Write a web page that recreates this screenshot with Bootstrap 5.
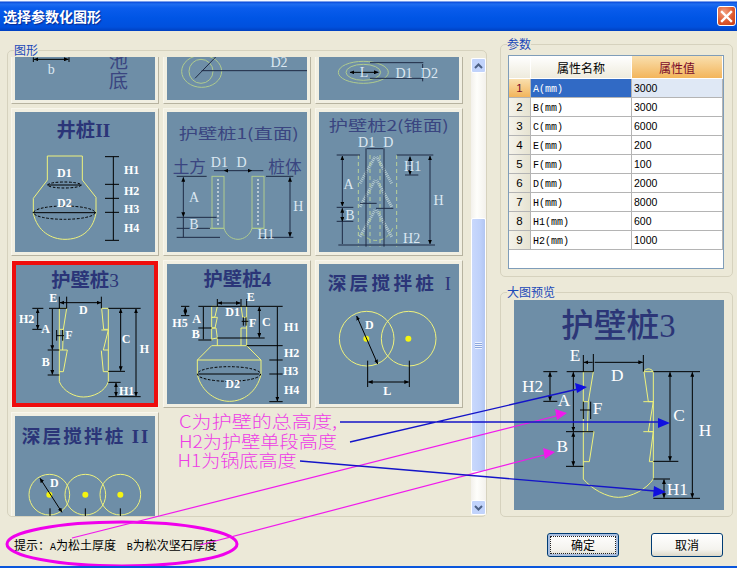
<!DOCTYPE html>
<html lang="zh">
<head>
<meta charset="utf-8">
<title>选择参数化图形</title>
<link href="https://cdn.jsdelivr.net/npm/bootstrap@5.3.0/dist/css/bootstrap.min.css" rel="stylesheet">
<style>
html,body{width:737px;height:568px;overflow:hidden;margin:0;background:#ECE9D8;}
body{font-family:"Liberation Sans","Noto Sans CJK SC",sans-serif;font-size:12px;color:#000;}
.dlg{position:relative;width:737px;height:568px;border-bottom:2px solid #0A56DC;overflow:hidden;}
.cap{height:31px;padding:0 1px 0 3px;background:linear-gradient(#FFFFFF 0,#E8F0FF 1px,#0A4AD8 2px,#1F6DF0 4px,#0A5CEC 8px,#0055E5 18px,#0050DD 27px,#0040C0 31px);}
.cap-title{font:bold 14px "Noto Sans CJK SC",sans-serif;color:#fff;text-shadow:1px 1px 1px #0A2A90;letter-spacing:0;}
.cap-close{width:19px;height:20px;margin-top:1px;padding:0;border:1px solid #fff;border-radius:3px;background:radial-gradient(circle at 35% 30%,#F2A080,#DD5A30 55%,#C63A12);}
.dlg-body{padding:12px 4px 0 7px;gap:13px;}
.col-left{width:480px;}
.col-right{width:233px;margin-top:-6px;}
.grp{margin:0;padding:0;min-width:0;border:1px solid #D6D2BE;border-radius:5px;}
.grp>legend{float:none;width:auto;margin:0 0 0 6px;padding:0;font:12px/14px "Noto Sans CJK SC",sans-serif;color:#1A48B8;background:#ECE9D8;}
.grp-gallery{height:474px;}
.viewport{width:463px;height:459px;overflow:hidden;}
.thumb-grid{display:grid;grid-template-columns:repeat(3,148px);grid-auto-rows:148px;gap:4px;margin:-101px 0 0 3px;}
.thumb{padding:3px;background:#F1EFE2;border:1px solid #F8F6EC;border-right-color:#B7B3A0;border-bottom-color:#B7B3A0;box-sizing:border-box;}
.thumb svg,.preview svg{display:block;background:#6E8EA7;}
.thumb.picked{padding:0;border:0;}
.picked-box{border:4px solid #EE0D0D;margin:1px;width:146px;height:146px;}
.sbar{width:15px;margin:1px 0 1px 1px;background:linear-gradient(90deg,#F3F1EC,#FEFEFB 40%,#F3F1EC);}
.sbtn{height:15px;border:1px solid #fff;border-radius:2px;background:#C1D3FB;color:#4D6185;}
.sthumb{margin-top:145px;height:254px;border:1px solid #fff;border-radius:2px;background:linear-gradient(90deg,#C9D8FC,#BFD1FA 60%,#B2C6F2);}
.grip{width:7px;height:7px;background:repeating-linear-gradient(#EEF3FE 0,#EEF3FE 1px,#8CA6DC 1px,#8CA6DC 2px);}
.hint{height:43px;padding:21px 0 0 7px;font:12px/14px "Noto Sans CJK SC",sans-serif;white-space:pre;}
.hint b,.pname b{font:10px "Liberation Mono",monospace;}
.grp-param{height:240px;margin-top:0;}
.grp-param .tbl-box{margin:4px 0 0 7px;width:216px;height:214px;background:#fff;border:1px solid #7F9DB9;}
.pgrid{width:214px;table-layout:fixed;border-collapse:separate;border-spacing:0;margin:0;font:10.5px "Liberation Sans",sans-serif;}
.pgrid th,.pgrid td{height:19px;padding:0 2px;vertical-align:middle;border:0;border-right:1px solid #B4B4B4;border-bottom:1px solid #B4B4B4;box-shadow:none;background:#fff;color:#000;}
.pgrid thead th{height:23px;font:12px "Noto Sans CJK SC",sans-serif;text-align:center;border-color:#fff;background:linear-gradient(#FFFFFF,#EEEBDD);}
.pgrid thead th.hot{background:linear-gradient(#F9DFAE,#F3B55B);color:#7A0A2A;}
.pgrid tbody th{text-align:center;font-weight:400;font-size:11.5px;background:linear-gradient(90deg,#F5F3EA,#E6E3D2);}
.pgrid tbody th.hot{background:linear-gradient(#F9DFAE,#F3B55B);color:#7A0A2A;}
.pname{color:#000;}
.pgrid td.sel-name{background:#316AC5;color:#fff;}
.pgrid td.sel-val{background:#DFE8F5;}
.grp-preview{height:232px;margin-top:8px;}
.preview{margin:1px 0 0 13px;}
.xp-btn{width:72px;height:24px;padding:0;font:12px/20px "Noto Sans CJK SC",sans-serif;color:#000;border:1px solid #003C74;border-radius:3px;background:linear-gradient(#FFFFFF,#F4F3EE 70%,#DCD8C8);}
.xp-btn.is-default{box-shadow:inset 0 0 0 2px #A9BEDF;outline:1px dotted #222;outline-offset:-4px;}
.btn-row{margin-top:16px;gap:32px;padding-left:47px;}
.overlay{position:absolute;left:0;top:0;pointer-events:none;}
.note{font:17px "Noto Sans CJK SC",sans-serif;fill:#EE3CE6;font-weight:300;}
svg text{text-anchor:middle;}
.ttl{font-family:"Noto Sans CJK SC",sans-serif;font-weight:700;fill:#2B3578;}
.ttl-thin{font-family:"Noto Sans CJK SC",sans-serif;font-weight:400;fill:#3A4580;}
.ttl-big{font-family:"Noto Sans CJK SC",sans-serif;font-weight:500;fill:#2C3677;}
.lb{font-family:"Liberation Serif",serif;font-weight:700;fill:#fff;font-size:36px;}
.lb-pale{font-family:"Liberation Serif",serif;font-weight:400;fill:#DCE8F2;font-size:42px;}
.yl{fill:none;stroke:#EFF27C;stroke-width:3;}
.grn{fill:none;stroke:#AFCB8E;stroke-width:3;}
.blk{fill:none;stroke:#000;stroke-width:3;}
.dk{fill:none;stroke:#1F2B45;stroke-width:3;}
.dash{fill:none;stroke:#000;stroke-width:3;stroke-dasharray:8 5;}
.dots{fill:none;stroke:#E8F0F0;stroke-width:5;stroke-dasharray:4 8;}
.ctr{fill:#F5F510;}
</style>
</head>
<body>
<svg width="0" height="0" class="position-absolute">
  <defs>
    <marker id="ah" markerUnits="userSpaceOnUse" markerWidth="14" markerHeight="12" refX="13" refY="6" orient="auto-start-reverse"><path d="M0 0L14 6L0 12z" fill="#000"/></marker>
  </defs>
</svg>

<div class="dlg d-flex flex-column">
  <div class="cap d-flex justify-content-between align-items-center">
    <span class="cap-title">选择参数化图形</span>
    <button class="cap-close d-flex align-items-center justify-content-center" type="button" aria-label="关闭">
      <svg width="13" height="13" viewBox="0 0 13 13"><path d="M2 2L11 11M11 2L2 11" stroke="#fff" stroke-width="2.4" stroke-linecap="square"/></svg>
    </button>
  </div>

  <div class="dlg-body d-flex">
    <div class="col-left">
      <fieldset class="grp grp-gallery">
        <legend>图形</legend>
        <div class="d-flex">
          <div class="viewport">
            <div class="thumb-grid">

              <div class="thumb"><svg width="140" height="140" viewBox="45 -120 420 420">
                <path class="blk" d="M100 172V186M207 172V186"/><path class="blk" d="M102 178H205" marker-start="url(#ah)" marker-end="url(#ah)"/>
                <text class="lb-pale" x="154" y="222">b</text>
                <text class="ttl-thin" x="355" y="205" font-size="58">池</text><text class="ttl-thin" x="355" y="265" font-size="58">底</text>
              </svg></div>

              <div class="thumb"><svg width="140" height="140" viewBox="501 -120 420 420">
                <ellipse class="grn" cx="605" cy="214" rx="60" ry="48"/><circle class="grn" cx="603" cy="214" r="36"/>
                <path class="dk" d="M605 212H921M585 235L648 170"/>
                <text class="lb-pale" x="837" y="200">D2</text>
              </svg></div>

              <div class="thumb"><svg width="140" height="140" viewBox="27 -240 420 420">
                <ellipse class="grn" cx="160" cy="97" rx="75" ry="33"/><ellipse class="grn" cx="160" cy="97" rx="52" ry="24"/>
                <path class="dk" d="M180 68H340M180 115H340M338 72V124"/><path class="blk" d="M120 97H205" marker-start="url(#ah)" marker-end="url(#ah)"/>
                <text class="lb-pale" x="162" y="110">L</text><text class="lb-pale" x="282" y="115">D1</text><text class="lb-pale" x="358" y="115">D2</text>
              </svg></div>

              <div class="thumb"><svg width="140" height="140" viewBox="45 36 420 420">
                <text class="ttl" x="250" y="110" font-size="58">井桩<tspan font-family="Liberation Serif">II</tspan></text>
                <path class="yl" d="M142 240V168H247V240L288 292V340M142 240L100 295V340"/>
                <path class="yl" d="M100 340C112 395 155 418 195 418C240 418 278 395 288 340"/>
                <ellipse class="dash" cx="193" cy="255" rx="50" ry="9"/><ellipse class="dash" cx="193" cy="338" rx="92" ry="20"/>
                <path class="blk" d="M142 255H245M98 338H288" stroke-width="4"/>
                <path class="blk" d="M340 170V420M315 170H357M315 253H357M315 295H357M315 337H357M315 421H357"/>
                <text class="lb" x="193" y="232">D1</text><text class="lb" x="193" y="322">D2</text>
                <text class="lb" x="395" y="223">H1</text><text class="lb" x="395" y="285">H2</text><text class="lb" x="395" y="339">H3</text><text class="lb" x="395" y="397">H4</text>
              </svg></div>

              <div class="thumb"><svg width="140" height="140" viewBox="21 36 420 420">
                <text class="ttl-thin" x="236" y="118" font-size="44" textLength="360" lengthAdjust="spacingAndGlyphs">护壁桩1(直面)</text>
                <text class="ttl-thin" x="88" y="218" font-size="50" fill="#3A4580">土方</text><text class="ttl-thin" x="375" y="218" font-size="50">桩体</text>
                <text class="lb-pale" x="178" y="200">D1</text><text class="lb-pale" x="245" y="200">D</text>
                <rect class="grn" x="156" y="229" width="36" height="156"/><rect class="grn" x="276" y="229" width="36" height="156"/>
                <path class="dots" d="M174 238V382M294 238V382"/>
                <path class="grn" d="M146 385H192C198 405 215 418 234 418C252 418 270 405 276 385H312"/>
                <path class="dk" d="M50 229H140M318 229H400M50 352H170M50 385H150M50 412H180M300 412H400"/>
                <path class="dk" d="M70 232V350" marker-start="url(#ah)" marker-end="url(#ah)"/><path class="dk" d="M70 350V412"/>
                <path class="dk" d="M390 232V410" marker-start="url(#ah)" marker-end="url(#ah)"/>
                <path class="dk" d="M162 212H192M276 212H310"/><path class="dk" d="M192 212H276" marker-start="url(#ah)" marker-end="url(#ah)"/>
                <text class="lb-pale" x="102" y="305">A</text><text class="lb-pale" x="102" y="388">B</text><text class="lb-pale" x="415" y="333">H</text><text class="lb-pale" x="318" y="418">H1</text>
              </svg></div>

              <div class="thumb"><svg width="140" height="140" viewBox="27 216 420 420">
                <text class="ttl-thin" x="236" y="272" font-size="44" textLength="360" lengthAdjust="spacingAndGlyphs">护壁桩2(锥面)</text>
                <text class="lb-pale" x="170" y="320">D1</text><text class="lb-pale" x="235" y="320">D</text>
                <path d="M150 430L195 350M245 430L200 350M150 500L195 420M245 500L200 420M150 590L195 510M245 590L200 510" fill="none" stroke="#B8CDD0" stroke-width="9" stroke-dasharray="3 3"/>
                <path fill="none" stroke="#B9D19A" stroke-width="3" stroke-dasharray="12 9" d="M145 345V620M180 345V620M210 345V620M260 345V620"/>
                <path class="grn" stroke-dasharray="12 9" d="M145 560C160 610 230 620 250 560"/>
                <path class="dk" d="M80 345H150M260 345H370M85 615H375M168 325V620M222 325V620M170 326H220M285 405H325M150 490H200M198 505H250M80 502H130M80 544H130"/>
                <path class="dk" d="M97 348V498" marker-start="url(#ah)" marker-end="url(#ah)"/><path class="dk" d="M97 505V612"/><path class="dk" d="M97 505V544" marker-start="url(#ah)" marker-end="url(#ah)"/>
                <path class="dk" d="M360 348V612" marker-start="url(#ah)" marker-end="url(#ah)"/><path class="dk" d="M300 350V404" marker-start="url(#ah)" marker-end="url(#ah)"/>
                <text class="lb-pale" x="116" y="446">A</text><text class="lb-pale" x="120" y="540">B</text><text class="lb-pale" x="308" y="394">H1</text><text class="lb-pale" x="386" y="494">H</text><text class="lb-pale" x="305" y="608">H2</text>
              </svg></div>

              <div class="thumb picked"><div class="picked-box"><svg width="138" height="138" viewBox="48 45 414 414">
                <text class="ttl" x="255" y="110" font-size="58">护壁桩<tspan font-family="Liberation Serif" font-weight="400">3</tspan></text>
                <path class="yl" d="M178 175V395M178 175H200L190 238H178M190 238L188 300M178 300H202L190 365H178"/>
                <path class="yl" d="M325 175V395M325 175H305L311 238H325M304 240H325L310 300H325M304 302L310 365H325"/>
                <path class="yl" d="M178 395C190 425 225 441 250 441C280 441 315 425 325 395"/>
                <path class="blk" d="M147 175H200M325 175H422M178 140V175M200 140V175M304 140V175M97 175H130M97 238H125M143 300H178M143 375H178M325 364H375M325 440H422M325 397H362M170 240V272M188 240V272"/>
                <path class="blk" d="M180 158H303" marker-start="url(#ah)" marker-end="url(#ah)"/>
                <path class="blk" d="M113 177V237" marker-start="url(#ah)" marker-end="url(#ah)"/>
                <path class="blk" d="M157 177V299" marker-end="url(#ah)"/><path class="blk" d="M157 301V373" marker-end="url(#ah)"/>
                <path class="blk" d="M362 177V362" marker-start="url(#ah)" marker-end="url(#ah)"/>
                <path class="blk" d="M408 177V438" marker-start="url(#ah)" marker-end="url(#ah)"/>
                <path class="blk" d="M348 399V438" marker-start="url(#ah)" marker-end="url(#ah)"/>
                <path class="blk" d="M170 257H192" stroke-width="4"/>
                <text class="lb" x="160" y="155">E</text><text class="lb" x="250" y="193">D</text><text class="lb" x="80" y="218">H2</text><text class="lb" x="137" y="249">A</text><text class="lb" x="207" y="267">F</text><text class="lb" x="378" y="280">C</text><text class="lb" x="433" y="310">H</text><text class="lb" x="137" y="347">B</text><text class="lb" x="380" y="434">H1</text>
              </svg></div></div>

              <div class="thumb"><svg width="140" height="140" viewBox="21 40 420 420">
                <text class="ttl" x="232" y="105" font-size="58">护壁桩<tspan font-family="Liberation Serif">4</tspan></text>
                <path class="yl" d="M155 167H172L165 198L160 200H155M155 167V270M155 200H172L165 232H155M155 232H168L172 262L155 265M260 167H243L248 200H260M260 167V285M243 232H258"/>
                <path class="yl" d="M172 262V285M243 232V285M155 285H260M155 285L112 328V372M260 285L303 328V372M112 328H303"/>
                <path class="yl" d="M112 372C125 425 170 452 208 452C250 452 290 425 303 372"/>
                <ellipse class="dash" cx="207" cy="370" rx="95" ry="22"/>
                <path class="blk" d="M115 370H298" stroke-width="4"/>
                <path class="blk" d="M115 167H368M172 145V167M243 145V167M260 145V167M63 167H88M63 195H88M115 232H155M115 268H155M172 262H314M260 285H368M328 328H368M328 370H368M328 453H368"/>
                <path class="blk" d="M174 157H241" marker-start="url(#ah)" marker-end="url(#ah)"/>
                <path class="blk" d="M76 169V193" marker-start="url(#ah)" marker-end="url(#ah)"/>
                <path class="blk" d="M130 169V266"/>
                <path class="blk" d="M298 169V260" marker-start="url(#ah)" marker-end="url(#ah)"/>
                <path class="blk" d="M352 169V451" marker-end="url(#ah)"/>
                <path class="blk" d="M245 212H265M250 200V225M258 200V225" stroke-width="3"/>
                <text class="lb" x="272" y="152">E</text><text class="lb" x="218" y="196">D1</text><text class="lb" x="60" y="230">H5</text><text class="lb" x="110" y="216">A</text><text class="lb" x="278" y="230">F</text><text class="lb" x="319" y="226">C</text><text class="lb" x="395" y="240">H1</text><text class="lb" x="107" y="262">B</text><text class="lb" x="395" y="320">H2</text><text class="lb" x="392" y="374">H3</text><text class="lb" x="395" y="430">H4</text><text class="lb" x="218" y="412">D2</text>
              </svg></div>

              <div class="thumb"><svg width="140" height="140" viewBox="27 26 420 420">
                <text class="ttl" x="238" y="105" font-size="56" textLength="370">深层搅拌桩 <tspan font-family="Liberation Serif" font-weight="400">I</tspan></text>
                <circle class="yl" cx="170" cy="250" r="82"/><circle class="yl" cx="296" cy="250" r="82"/>
                <circle class="ctr" cx="169" cy="250" r="9"/><circle class="ctr" cx="295" cy="250" r="9"/>
                <path class="blk" d="M140 182L203 326" marker-start="url(#ah)" marker-end="url(#ah)"/>
                <path class="blk" d="M173 316V395M298 316V395"/><path class="blk" d="M175 380H296" marker-start="url(#ah)" marker-end="url(#ah)"/>
                <text class="lb" x="178" y="221">D</text><text class="lb" x="232" y="419">L</text>
              </svg></div>

              <div class="thumb"><svg width="140" height="140" viewBox="45 48 420 420">
                <text class="ttl" x="255" y="130" font-size="56" textLength="380">深层搅拌桩 <tspan font-family="Liberation Serif">II</tspan></text>
                <circle class="yl" cx="148" cy="284" r="61"/><circle class="yl" cx="256" cy="284" r="61"/><circle class="yl" cx="361" cy="284" r="61"/>
                <circle class="ctr" cx="148" cy="284" r="9"/><circle class="ctr" cx="256" cy="284" r="9"/><circle class="ctr" cx="361" cy="284" r="9"/>
                <path class="blk" d="M120 235L186 337" marker-start="url(#ah)" marker-end="url(#ah)"/>
                <path class="blk" d="M150 325V348M256 325V348M361 325V348"/>
                <text class="lb" x="163" y="262">D</text>
              </svg></div>

            </div>
          </div>

          <div class="sbar d-flex flex-column">
            <div class="sbtn d-flex align-items-center justify-content-center"><svg width="9" height="6" viewBox="0 0 9 6"><path d="M1 5L4.5 1.5L8 5" fill="none" stroke="#4D6185" stroke-width="2"/></svg></div>
            <div class="sthumb d-flex align-items-center justify-content-center"><div class="grip"></div></div>
            <div class="sbtn mt-auto d-flex align-items-center justify-content-center"><svg width="9" height="6" viewBox="0 0 9 6"><path d="M1 1L4.5 4.5L8 1" fill="none" stroke="#4D6185" stroke-width="2"/></svg></div>
          </div>
        </div>
      </fieldset>
      <div class="hint">提示：<b>A</b>为松土厚度    <b>B</b>为松次坚石厚度</div>
    </div>

    <div class="col-right">
      <fieldset class="grp grp-param">
        <legend>参数</legend>
        <div class="tbl-box">
          <table class="table pgrid">
            <colgroup><col style="width:22px"><col style="width:101px"><col style="width:91px"></colgroup>
            <thead><tr><th></th><th>属性名称</th><th class="hot">属性值</th></tr></thead>
            <tbody>
              <tr><th class="hot">1</th><td class="sel-name pname"><b>A(mm)</b></td><td class="sel-val">3000</td></tr>
              <tr><th>2</th><td class="pname"><b>B(mm)</b></td><td>3000</td></tr>
              <tr><th>3</th><td class="pname"><b>C(mm)</b></td><td>6000</td></tr>
              <tr><th>4</th><td class="pname"><b>E(mm)</b></td><td>200</td></tr>
              <tr><th>5</th><td class="pname"><b>F(mm)</b></td><td>100</td></tr>
              <tr><th>6</th><td class="pname"><b>D(mm)</b></td><td>2000</td></tr>
              <tr><th>7</th><td class="pname"><b>H(mm)</b></td><td>8000</td></tr>
              <tr><th>8</th><td class="pname"><b>H1(mm)</b></td><td>600</td></tr>
              <tr><th>9</th><td class="pname"><b>H2(mm)</b></td><td>1000</td></tr>
            </tbody>
          </table>
        </div>
      </fieldset>

      <fieldset class="grp grp-preview">
        <legend>大图预览</legend>
        <div class="preview"><svg width="210" height="210" viewBox="42 63 630 630">
          <text class="ttl-big" x="355" y="175" font-size="98">护壁桩<tspan font-family="Liberation Serif">3</tspan></text>
          <path class="yl" d="M250 278V600M250 278H280L265 368H250M265 368L262 458H250M250 458H282L268 548H250"/>
          <path class="yl" d="M460 278V600M460 278H432L445 368H460M430 368H460L445 458H460M430 458H460L448 548H460M432 278C436 268 452 266 460 278"/>
          <path class="yl" d="M250 600C275 630 320 655 355 655C395 655 440 630 460 600"/>
          <path class="blk" d="M200 278H280M460 278H600M250 228V278M280 225V278M430 228V278M130 278H172M130 367H172M198 458H280M198 562H250M460 547H535M460 658H600M460 600H510M250 368V420M272 368V420"/>
          <path class="blk" d="M252 250H278M284 250H428" marker-start="url(#ah)" marker-end="url(#ah)"/>
          <path class="blk" d="M150 280V365" marker-start="url(#ah)" marker-end="url(#ah)"/>
          <path class="blk" d="M220 280V456" marker-start="url(#ah)" marker-end="url(#ah)"/>
          <path class="blk" d="M220 460V560" marker-start="url(#ah)" marker-end="url(#ah)"/>
          <path class="blk" d="M510 280V545" marker-start="url(#ah)" marker-end="url(#ah)"/>
          <path class="blk" d="M577 280V656" marker-start="url(#ah)" marker-end="url(#ah)"/>
          <path class="blk" d="M492 602V656" marker-start="url(#ah)" marker-end="url(#ah)"/>
          <path class="blk" d="M240 393H272" stroke-width="5"/>
          <g font-family="Liberation Serif" fill="#fff" font-size="52">
            <text x="225" y="245">E</text><text x="352" y="305">D</text><text x="98" y="338">H2</text><text x="192" y="382">A</text><text x="293" y="405">F</text><text x="537" y="425">C</text><text x="615" y="472">H</text><text x="187" y="520">B</text><text x="532" y="647">H1</text>
          </g>
        </svg></div>
      </fieldset>

      <div class="btn-row d-flex">
        <button type="button" class="xp-btn is-default">确定</button>
        <button type="button" class="xp-btn">取消</button>
      </div>
    </div>
  </div>

  <svg class="overlay" width="737" height="568" viewBox="0 0 737 568">
    <text class="note" x="258" y="428" textLength="158" lengthAdjust="spacingAndGlyphs">C为护壁的总高度,</text>
    <text class="note" x="258" y="448" textLength="158" lengthAdjust="spacingAndGlyphs">H2为护壁单段高度</text>
    <text class="note" x="237" y="467" textLength="119" lengthAdjust="spacingAndGlyphs">H1为锅底高度</text>
    <ellipse cx="122" cy="544" rx="115" ry="22" fill="none" stroke="#F000EC" stroke-width="3"/>
    <path d="M72 538L560 415M200 545L548 454" fill="none" stroke="#F01AEC" stroke-width="1.2"/>
    <path d="M567 413L555 409L557 420zM555 452L543 448L545 459z" fill="#F01AEC"/>
    <path d="M340 422H660M350 442L578 389M300 461L655 491" fill="none" stroke="#1414C8" stroke-width="1.3"/>
    <path d="M670 423L658 418V428zM587 387L575 383L577 393zM666 492L654 486L653 497z" fill="#1010E0"/>
  </svg>
</div>
<script src="https://cdn.jsdelivr.net/npm/bootstrap@5.3.0/dist/js/bootstrap.bundle.min.js"></script>
</body>
</html>
